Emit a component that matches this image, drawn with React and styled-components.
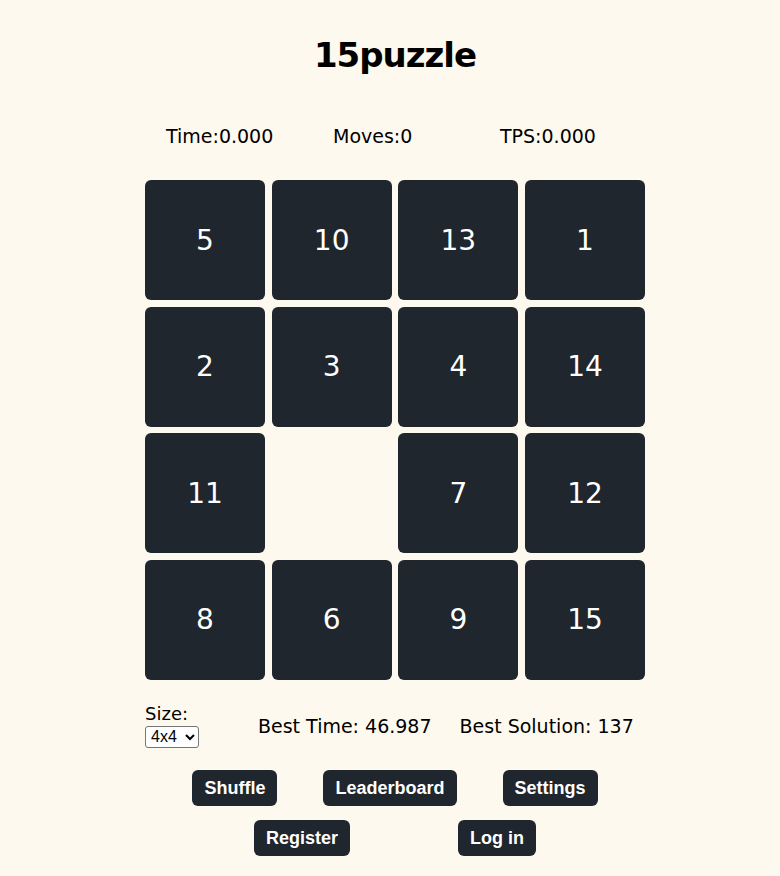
import React from "react";
import styled, { createGlobalStyle } from "styled-components";

const Global = createGlobalStyle`
  html, body { margin: 0; padding: 0; background: #fef9ee; }
  body { font-family: "DejaVu Sans", "Noto Sans", sans-serif; color: #000; }
`;

const Page = styled.div`
  width: 780px;
  height: 876px;
  display: flex;
  flex-direction: column;
  align-items: center;
  box-sizing: border-box;
  padding-top: 30px;
  padding-left: 10px;
`;

const Title = styled.h1`
  margin: 0;
  height: 50px;
  line-height: 50px;
  font-size: 34px;
  font-weight: bold;
  letter-spacing: -1px;
`;

const Stats = styled.div`
  margin-top: 43px;
  width: 500px;
  padding-left: 42px;
  display: grid;
  grid-template-columns: 167px 167px 167px;
  font-size: 19px;
  line-height: 26px;
`;

const Board = styled.div`
  margin-top: 31px;
  width: 500px;
  display: grid;
  grid-template-columns: repeat(4, 120px);
  grid-auto-rows: 120px;
  column-gap: 6.67px;
  row-gap: 6.67px;
`;

const Tile = styled.div`
  border-radius: 6px;
  background: ${(p) => (p.$empty ? "transparent" : "#1f262d")};
  color: #fff;
  display: flex;
  align-items: center;
  justify-content: center;
  font-size: 28px;
`;

const InfoRow = styled.div`
  margin-top: 22px;
  width: 500px;
  display: flex;
  align-items: center;
`;

const SizeBox = styled.div`
  display: flex;
  flex-direction: column;
  align-items: flex-start;
  font-size: 18px;
  line-height: 24px;
  width: 113px;
`;

const Select = styled.select`
  font-family: "Liberation Sans", Arial, sans-serif;
  font-size: 16px;
  width: 54px;
  height: 22px;
  padding: 0 1px;
  border: 1px solid #767676;
  border-radius: 3px;
  background: #fff;
  color: #000;
`;

const Best = styled.span`
  font-size: 19px;
  margin-right: ${(p) => p.$gap || 0}px;
  margin-top: 3px;
  white-space: nowrap;
`;

const ButtonRow = styled.div`
  display: flex;
  justify-content: center;
  gap: ${(p) => p.$gap}px;
  margin-top: ${(p) => p.$top}px;
`;

const Button = styled.button`
  font-family: "Liberation Sans", Arial, sans-serif;
  font-weight: bold;
  font-size: 18px;
  line-height: 20px;
  padding: 8px 12px;
  border: none;
  border-radius: 6px;
  background: #1f262d;
  color: #fff;
  cursor: pointer;
`;

const tiles = [5, 10, 13, 1, 2, 3, 4, 14, 11, null, 7, 12, 8, 6, 9, 15];

export default function App() {
  return (
    <Page>
      <Global />
      <Title>15puzzle</Title>
      <Stats>
        <span>Time:0.000</span>
        <span>Moves:0</span>
        <span>TPS:0.000</span>
      </Stats>
      <Board>
        {tiles.map((t, i) => (
          <Tile key={i} $empty={t === null}>
            {t}
          </Tile>
        ))}
      </Board>
      <InfoRow>
        <SizeBox>
          <span>Size:</span>
          <Select defaultValue="4x4">
            <option>3x3</option>
            <option>4x4</option>
            <option>5x5</option>
          </Select>
        </SizeBox>
        <Best $gap={28}>Best Time: 46.987</Best>
        <Best>Best Solution: 137</Best>
      </InfoRow>
      <ButtonRow $gap={46} $top={22}>
        <Button>Shuffle</Button>
        <Button>Leaderboard</Button>
        <Button>Settings</Button>
      </ButtonRow>
      <ButtonRow $gap={108} $top={14}>
        <Button>Register</Button>
        <Button>Log in</Button>
      </ButtonRow>
    </Page>
  );
}
